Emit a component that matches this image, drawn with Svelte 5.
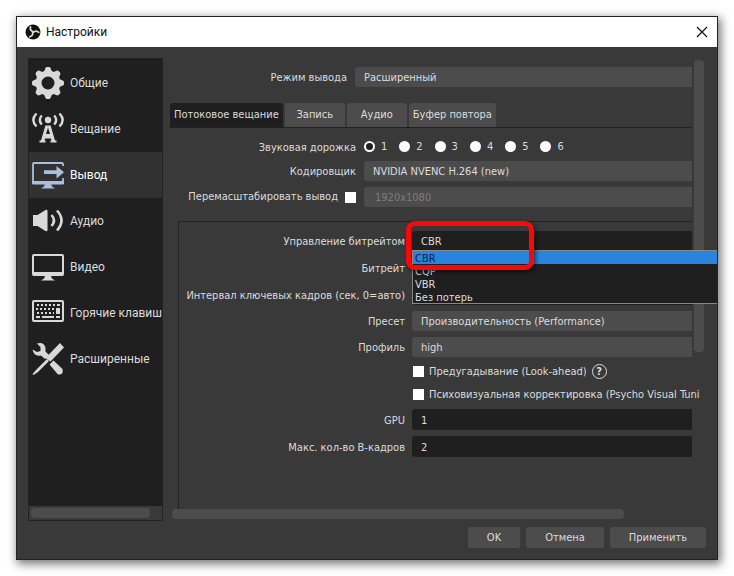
<script lang="ts">
    const sections = [
        { id: "general", label: "Общие" },
        { id: "stream", label: "Вещание" },
        { id: "output", label: "Вывод" },
        { id: "audio", label: "Аудио" },
        { id: "video", label: "Видео" },
        { id: "hotkeys", label: "Горячие клавиш" },
        { id: "advanced", label: "Расширенные" },
    ];
    const tabs = ["Потоковое вещание", "Запись", "Аудио", "Буфер повтора"];
    const rateControls = ["CBR", "CQP", "VBR", "Без потерь"];
    const tracks = [1, 2, 3, 4, 5, 6];
    const teeth = [0, 45, 90, 135, 180, 225, 270, 315];

    let section = $state("output");
    let tab = $state(tabs[0]);
    let track = $state(1);
    let rateControl = $state("CBR");
    let popupOpen = $state(true);
    let bitrate = $state("2500");
    let keyint = $state("0");
    let gpu = $state("1");
    let bframes = $state("2");

    // Two upper key rows of the keyboard icon
    const keys = [4, 8, 12, 16, 20].flatMap((x) => [
        { x: x + 1, y: 7 },
        { x, y: 11 },
    ]);

    function pick(value: string) {
        rateControl = value;
        popupOpen = false;
    }
</script>

{#snippet icon(id: string)}
    <svg class="icon" viewBox="0 0 32 32" aria-hidden="true">
        {#if id === "general"}
            <circle cx="16" cy="16" r="9.5" fill="none" stroke="currentColor" stroke-width="6" />
            {#each teeth as angle}
                <path d="M11.4 6 L13.4 1.2 Q14 0 15 0 H17 Q18 0 18.6 1.2 L20.6 6 Z" fill="currentColor" transform="rotate({angle} 16 16)" />
            {/each}
        {:else if id === "stream"}
            <g fill="none" stroke="currentColor" stroke-width="2.4">
                <path d="M4.5 0.5 Q-1.8 7 4.5 13.5" />
                <path d="M9.8 2.5 Q5.8 7 9.8 11.5" />
                <path d="M22.2 2.5 Q26.2 7 22.2 11.5" />
                <path d="M27.5 0.5 Q33.8 7 27.5 13.5" />
            </g>
            <circle cx="16" cy="7" r="3.2" fill="currentColor" />
            <path d="M13.4 12.5 H18.6 L23 27.5 H24.5 V29.5 H18.5 V27.5 H19.5 L19 25.5 H13 L12.5 27.5 H13.5 V29.5 H7.5 V27.5 H9 Z M16 14.5 L14 21 H18 Z" fill="currentColor" fill-rule="evenodd" />
        {:else if id === "output"}
            <path d="M31 7 V5 Q31 4 30 4 H2 Q1 4 1 5 V24 H31 V19" fill="none" stroke="currentColor" stroke-width="1.8" />
            <path d="M0 22 H32 V24 Q32 25.5 30.5 25.5 H1.5 Q0 25.5 0 24 Z M13 25 H19 L20 27.5 L23 29.5 H9 L12 27.5 Z" fill="currentColor" />
            <path d="M12 11.3 H24.5 V7 L32 13.2 L24.5 19.4 V15 H12 Z" fill="currentColor" />
        {:else if id === "audio"}
            <path d="M1 10 H5.5 L13.5 5 Q15.5 4 15.5 6 V25 Q15.5 27 13.5 26 L5.5 21 H1 Z" fill="currentColor" />
            <g fill="none" stroke="currentColor" stroke-width="2.6">
                <path d="M19.5 10 Q24.5 15.5 19.5 21" />
                <path d="M25 5.5 Q34 15.5 25 25.5" />
            </g>
        {:else if id === "video"}
            <rect x="1" y="4" width="30" height="20" rx="1" fill="none" stroke="currentColor" stroke-width="2" />
            <path d="M1 21 H31 V25 H1 Z M13 25 H19 L20 27.5 L23 29.5 H9 L12 27.5 Z" fill="currentColor" />
        {:else if id === "hotkeys"}
            <rect x="1" y="4" width="30" height="20" rx="1" fill="none" stroke="currentColor" stroke-width="2" />
            {#each keys as key}
                <rect x={key.x} y={key.y} width="2" height="2" fill="currentColor" />
            {/each}
            <path d="M25 7 H28 V9 H25 Z M24 11 H28 V17 H24 Z M5 15 H7 V17 H5 Z M9 15 H11 V17 H9 Z M13 15 H15 V17 H13 Z M17 15 H19 V17 H17 Z M21 15 H22 V17 H21 Z M4 19 H8 V21 H4 Z M10 19 H22 V21 H10 Z M24 19 H28 V21 H24 Z" fill="currentColor" />
        {:else}
            <path d="M5 0.5 Q12 -1.5 13.5 5 L13.5 8.5 L17 12 L13 16 L9 12.5 Q2 14 0.5 6.5 L5 9 L8.5 8 L8.5 4 Z" fill="currentColor" />
            <path d="M17.5 21.5 L21.5 17.5 L30.5 26 Q32 32 26 31.5 Z" fill="currentColor" />
            <path d="M28 0 L32 4.5 L18.5 18.5 L13.5 15 Z" fill="currentColor" />
            <path d="M15 16 L17 18 L6 29 L1.5 32 L0.5 31 L4 27 Z" fill="currentColor" />
        {/if}
    </svg>
{/snippet}

<main class="page">
    <div class="window">
        <header class="titlebar">
            <svg class="logo" viewBox="0 0 16 16" aria-hidden="true">
                <circle cx="8" cy="8" r="7.5" fill="#111" />
                <g fill="none" stroke="#ddd" stroke-width="1.7" stroke-linecap="round">
                    {#each [0, 120, 240] as angle}
                        <path d="M8 7.5 Q4.5 6.5 5.5 2.8" transform="rotate({angle} 8 8)" />
                    {/each}
                </g>
            </svg>
            <h1>Настройки</h1>
            <button class="close" aria-label="Закрыть">
                <svg viewBox="0 0 10 10"><path d="M0 0 L10 10 M10 0 L0 10" stroke="#111" stroke-width="1.2" /></svg>
            </button>
        </header>

        <div class="body">
            <div class="columns">
                <nav class="sidebar">
                    <div class="sections">
                        {#each sections as s}
                            <button class="section" class:active={section === s.id} onclick={() => (section = s.id)}>
                                {@render icon(s.id)}
                                <span>{s.label}</span>
                            </button>
                        {/each}
                    </div>
                    <div class="sidebar-scroll"><div class="thumb"></div></div>
                </nav>

                <div class="content">
                    <div class="viewport">
                        <div class="row mode">
                            <label for="mode">Режим вывода</label>
                            <select id="mode"><option>Расширенный</option></select>
                        </div>

                        <div class="tabs" role="tablist">
                            {#each tabs as t}
                                <button class="tab" role="tab" aria-selected={tab === t} class:active={tab === t} onclick={() => (tab = t)}>{t}</button>
                            {/each}
                        </div>

                        <div class="form outer">
                            <div class="row short" role="radiogroup" aria-labelledby="track-label">
                                <span class="name" id="track-label">Звуковая дорожка</span>
                                <div class="tracks">
                                    {#each tracks as n}
                                        <label><input type="radio" name="track" value={n} bind:group={track} />{n}</label>
                                    {/each}
                                </div>
                            </div>
                            <div class="row">
                                <label for="encoder">Кодировщик</label>
                                <select id="encoder"><option>NVIDIA NVENC H.264 (new)</option></select>
                            </div>
                            <div class="row">
                                <label class="with-box">Перемасштабировать вывод <input type="checkbox" /></label>
                                <select class="rescale" aria-label="Разрешение" disabled><option>1920x1080</option></select>
                            </div>
                        </div>

                        <div class="form group">
                            <div class="row">
                                <label for="rate">Управление битрейтом</label>
                                <div class="combo">
                                    <select id="rate" class="dark" bind:value={rateControl}>
                                        {#each rateControls as r}
                                            <option>{r}</option>
                                        {/each}
                                    </select>
                                    {#if popupOpen}
                                        <div class="popup" role="listbox" aria-label="Управление битрейтом">
                                            {#each rateControls as r}
                                                <button role="option" aria-selected={rateControl === r} class:active={rateControl === r} onclick={() => pick(r)}>{r}</button>
                                            {/each}
                                        </div>
                                    {/if}
                                    <div class="marker"></div>
                                </div>
                            </div>
                            <div class="row">
                                <label for="bitrate">Битрейт</label>
                                <input id="bitrate" type="text" bind:value={bitrate} />
                            </div>
                            <div class="row">
                                <label for="keyint">Интервал ключевых кадров (сек, 0=авто)</label>
                                <input id="keyint" type="text" bind:value={keyint} />
                            </div>
                            <div class="row">
                                <label for="preset">Пресет</label>
                                <select id="preset"><option>Производительность (Performance)</option></select>
                            </div>
                            <div class="row">
                                <label for="profile">Профиль</label>
                                <select id="profile"><option>high</option></select>
                            </div>
                            <div class="row short">
                                <label class="check">
                                    <input type="checkbox" />
                                    <span>Предугадывание (Look-ahead)</span>
                                    <span class="help">?</span>
                                </label>
                            </div>
                            <div class="row short">
                                <label class="check">
                                    <input type="checkbox" />
                                    <span>Психовизуальная корректировка (Psycho Visual Tuni</span>
                                </label>
                            </div>
                            <div class="row">
                                <label for="gpu">GPU</label>
                                <input id="gpu" type="text" bind:value={gpu} />
                            </div>
                            <div class="row">
                                <label for="bframes">Макс. кол-во B-кадров</label>
                                <input id="bframes" type="text" bind:value={bframes} />
                            </div>
                        </div>
                    </div>
                    <div class="vscroll"><div class="thumb"></div></div>
                    <div class="hscroll"><div class="thumb"></div></div>
                </div>
            </div>

            <footer class="actions">
                <button>OK</button>
                <button>Отмена</button>
                <button>Применить</button>
            </footer>
        </div>
    </div>
</main>

<style>
    :global(body) {
        background: #fff;
    }

    .page {
        padding: 16px;
        font: 11px/14px "DejaVu Sans Condensed", "DejaVu Sans", sans-serif;
        color: #dcdcdc;
    }

    .page * {
        box-sizing: border-box;
    }

    button,
    input,
    select {
        margin: 0;
        border: 0;
        font: inherit;
        color: inherit;
    }

    .window {
        border: 1px solid #222;
        background: #393939;
        box-shadow: 2px 3px 9px 1px #0008;
        overflow: hidden;
    }

    .titlebar {
        display: flex;
        align-items: center;
        gap: 5px;
        height: 30px;
        padding: 0 10px 0 8px;
        background: #fff;
        color: #111;
    }

    .logo {
        width: 16px;
        height: 16px;
    }

    h1 {
        flex: 1;
        margin: 0;
        font: 12px/16px Roboto, sans-serif;
    }

    .close {
        display: flex;
        padding: 0;
        background: none;
    }

    .close svg {
        width: 10px;
        height: 10px;
        overflow: visible;
    }

    .body {
        padding: 11px;
    }

    .columns {
        display: flex;
        gap: 6px;
    }

    .sidebar {
        display: flex;
        flex-direction: column;
        flex: none;
        width: 135px;
        border: 1px solid #222;
    }

    .sections {
        flex: 1;
        padding-top: 1px;
        background: #1f1f1f;
        overflow: hidden;
    }

    .section {
        display: flex;
        align-items: center;
        gap: 6px;
        width: 100%;
        height: 46px;
        padding: 0 0 0 3px;
        background: none;
        font: 12px/16px Roboto, sans-serif;
        white-space: nowrap;
        text-align: left;
    }

    .section.active {
        background: #313131;
        color: #fff;
    }

    .icon {
        flex: none;
        width: 32px;
        height: 32px;
        color: #d9d9d9;
    }

    .active .icon {
        color: #a9c0dd;
    }

    .thumb {
        background: #4c4c4c;
        border-radius: 4px;
    }

    .sidebar-scroll {
        padding: 2px 12px 2px 2px;
    }

    .sidebar-scroll .thumb {
        height: 10px;
    }

    .content {
        display: grid;
        grid-template-columns: minmax(0, 1fr) 10px;
        column-gap: 2px;
        flex: 1;
        min-width: 0;
        padding: 0 2px 2px 0;
    }

    .viewport {
        padding-top: 9px;
    }

    .vscroll {
        padding-top: 2px;
    }

    .vscroll .thumb {
        height: 65%;
    }

    .hscroll {
        padding-left: 3px;
    }

    .hscroll .thumb {
        width: 87%;
        height: 10px;
    }

    .row {
        display: grid;
        grid-template-columns: 187px minmax(0, 1fr);
        column-gap: 8px;
        align-items: center;
    }

    .row.mode {
        grid-template-columns: 178px minmax(0, 1fr);
    }

    .row > label,
    .name {
        padding-top: 2px;
        text-align: right;
        white-space: nowrap;
    }

    .row.short {
        height: 17px;
    }

    .row > .with-box,
    .group .row > .check {
        padding-top: 0;
    }

    .form {
        display: grid;
        row-gap: 6px;
    }

    select,
    input[type="text"] {
        display: block;
        appearance: none;
        width: 100%;
        height: 20px;
        padding: 2px 9px 0;
        border-radius: 3px 0 0 3px;
        background: #4c4c4c;
    }

    input[type="text"] {
        height: 21px;
        background: #1f1f1f;
    }

    select.dark {
        background: #1f1f1f;
    }

    select.rescale {
        padding-left: 11px;
        color: #7d7d7d;
        opacity: 1;
    }

    .tabs {
        display: flex;
        gap: 2px;
        height: 25px;
        margin-top: 16px;
        padding-left: 1px;
        border-bottom: 1px solid #222;
    }

    .tab {
        min-width: 60px;
        padding: 0 4px;
        border-radius: 3px 3px 0 0;
        background: #4c4c4c;
        white-space: nowrap;
    }

    .tab.active {
        background: #1f1f1f;
    }

    .outer {
        padding-top: 10px;
    }

    .tracks {
        display: flex;
        gap: 12px;
    }

    .tracks label {
        display: flex;
        align-items: center;
        gap: 6px;
    }

    input[type="radio"] {
        appearance: none;
        width: 11px;
        height: 11px;
        border-radius: 50%;
        background: #fff;
    }

    input[type="radio"]:checked {
        border: 2px solid #fff;
        background: #1f1f1f;
    }

    input[type="checkbox"] {
        appearance: none;
        flex: none;
        width: 11px;
        height: 11px;
        background: #fff;
    }

    .row > .with-box {
        display: flex;
        align-items: center;
        justify-content: flex-end;
        gap: 7px;
    }

    .group {
        margin: 14px 0 0 9px;
        padding: 9px 0 52px;
        border: solid #222;
        border-width: 1px 0 0 1px;
    }

    .group .row {
        grid-template-columns: 226px minmax(0, 1fr);
        column-gap: 7px;
    }

    .group .row > .check {
        grid-column: 2;
        display: flex;
        align-items: center;
        gap: 5px;
        padding-left: 1px;
    }

    .help {
        flex: none;
        width: 15px;
        height: 15px;
        border: 1px solid #dcdcdc;
        border-radius: 50%;
        font-weight: bold;
        line-height: 13px;
        text-align: center;
    }

    .combo {
        position: relative;
    }

    /* The list runs past the scroll area, up to the window's edge */
    .popup {
        position: absolute;
        z-index: 1;
        top: 19px;
        left: 0;
        right: -26px;
        border: 1px solid #888;
        background: #1f1f1f;
    }

    .popup button {
        display: block;
        width: 100%;
        height: 13px;
        padding: 1px 2px 0;
        background: none;
        line-height: 13px;
        text-align: left;
    }

    .popup .active {
        background: #2884dc;
        color: #10203a;
    }

    .marker {
        position: absolute;
        z-index: 2;
        top: -10px;
        left: -6px;
        width: 128px;
        height: 49px;
        border: 5px solid #f80808;
        border-radius: 9px;
        box-shadow: 2px 2px 4px #0008;
        pointer-events: none;
    }

    .actions {
        display: flex;
        justify-content: flex-end;
        gap: 6px;
        margin-top: 6px;
    }

    .actions button {
        height: 21px;
        padding: 1px 19px 0;
        border-radius: 2px;
        background: #4c4c4c;
    }
</style>
